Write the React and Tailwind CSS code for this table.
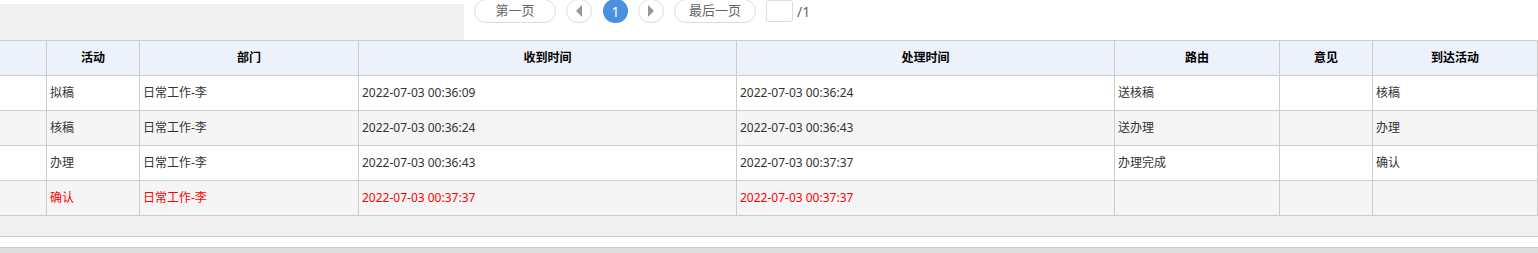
import React from "react";

const cols = ["w-[47px]", "w-[93px]", "w-[219px]", "w-[378px]", "w-[378px]", "w-[165px]", "w-[93px]", "w-[165px]"];
const headers = ["", "活动", "部门", "收到时间", "处理时间", "路由", "意见", "到达活动"];
const rows = [
  ["", "拟稿", "日常工作-李", "2022-07-03 00:36:09", "2022-07-03 00:36:24", "送核稿", "", "核稿"],
  ["", "核稿", "日常工作-李", "2022-07-03 00:36:24", "2022-07-03 00:36:43", "送办理", "", "办理"],
  ["", "办理", "日常工作-李", "2022-07-03 00:36:43", "2022-07-03 00:37:37", "办理完成", "", "确认"],
  ["", "确认", "日常工作-李", "2022-07-03 00:37:37", "2022-07-03 00:37:37", "", "", ""],
];

export default function App() {
  return (
    <div className="w-[1538px] h-[253px] overflow-hidden bg-white text-[12px] text-[#333]" style={{ fontFamily: '"Noto Sans", "Noto Sans CJK SC", sans-serif' }}>
      <div className="flex h-[40px]">
        <div className="w-[464px] h-[36px] mt-[4px] bg-[#f0f0f0]" />
        <div className="flex items-start -mt-px ml-[10px] text-[13px] text-[#666]">
          <div className="w-[82px] h-[24px] rounded-full border border-[#ddd] flex items-center justify-center">第一页</div>
          <div className="w-[26px] h-[24px] ml-[10px] rounded-full border border-[#ddd] flex items-center justify-center">
            <svg width="8" height="12" viewBox="0 0 8 12"><path d="M7 0 L1 6 L7 12 Z" fill="#999" /></svg>
          </div>
          <div className="w-[25px] h-[24px] ml-[11px] rounded-full bg-[#4a90e2] text-white flex items-center justify-center text-[14px]">1</div>
          <div className="w-[26px] h-[24px] ml-[10px] rounded-full border border-[#ddd] flex items-center justify-center">
            <svg width="8" height="12" viewBox="0 0 8 12"><path d="M1 0 L7 6 L1 12 Z" fill="#999" /></svg>
          </div>
          <div className="w-[82px] h-[24px] ml-[10px] rounded-full border border-[#ddd] flex items-center justify-center">最后一页</div>
          <div className="w-[27px] h-[22px] ml-[10px] mt-px rounded-[3px] border border-[#ddd] bg-white" />
          <div className="ml-[4px] h-[24px] flex items-center text-[14px] text-[#666]">/1</div>
        </div>
      </div>
      <div className="border-t border-[#ccc]">
        <div className="flex bg-[#edf2fa] font-bold text-[#000]">
          {headers.map((h, i) => (
            <div key={i} className={`${cols[i]} h-[35px] shrink-0 border-r border-b border-[#ccc] flex items-center justify-center`}>{h}</div>
          ))}
        </div>
        {rows.map((r, ri) => (
          <div key={ri} className={`flex ${ri % 2 === 1 ? "bg-[#f5f5f5]" : "bg-white"} ${ri === 3 ? "text-[#ff0000]" : ""}`}>
            {r.map((c, i) => (
              <div key={i} className={`${cols[i]} h-[35px] shrink-0 border-r border-b border-[#ccc] flex items-center pl-[3px]`}>{c}</div>
            ))}
          </div>
        ))}
        <div className="h-[21px] bg-[#f0f0f0] border-b border-[#ccc] w-[1538px]" />
        <div className="h-[11px] bg-white border-b border-[#ccc]" />
        <div className="h-[6px] bg-[#ddd]" />
      </div>
    </div>
  );
}
